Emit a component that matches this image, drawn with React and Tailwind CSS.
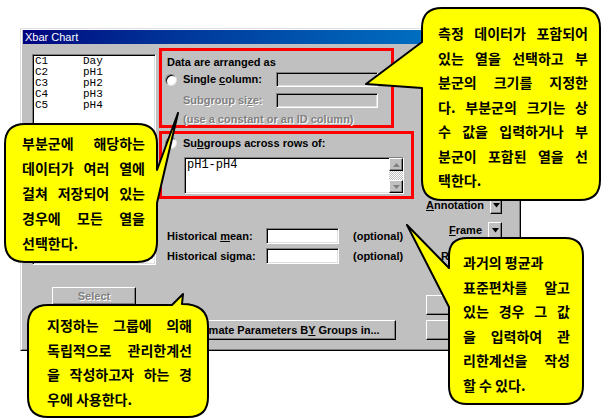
import React from "react";

const raised =
  "bg-[#c0c0c0] border border-t-white border-l-white border-r-black border-b-black shadow-[inset_-1px_-1px_0_#808080]";
const sunken =
  "border border-t-[#808080] border-l-[#808080] border-r-white border-b-white shadow-[inset_1px_1px_0_#000,inset_-1px_-1px_0_#dfdfdf]";
const disabled = "text-[#808080] [text-shadow:1px_1px_0_#fff]";

function Radio() {
  return (
    <div className="ml-[3px] w-[12px] h-[12px] shrink-0 rounded-full bg-white border border-t-[#808080] border-l-[#808080] border-r-[#dfdfdf] border-b-[#dfdfdf] shadow-[inset_1px_1px_0_#000]" />
  );
}

function DropButton() {
  return (
    <div className={`${raised} w-[14px] h-[17px] flex items-center justify-center`}>
      <svg width="7" height="5" viewBox="0 0 7 5">
        <path d="M0 0 H7 L3.5 4.5 Z" fill="#000" />
      </svg>
    </div>
  );
}

function ScrollArrow({ up }) {
  return (
    <div className={`${raised} h-[13px] flex items-center justify-center`}>
      <svg width="7" height="4" viewBox="0 0 7 4">
        {up ? (
          <path d="M0 4 H7 L3.5 0 Z" fill="#808080" />
        ) : (
          <path d="M0 0 H7 L3.5 4 Z" fill="#808080" />
        )}
      </svg>
    </div>
  );
}

function Dialog() {
  const columns = [
    ["C1", "Day"],
    ["C2", "pH1"],
    ["C3", "pH2"],
    ["C4", "pH3"],
    ["C5", "pH4"],
  ];
  return (
    <div className="w-[501px] h-[323px] bg-[#c0c0c0] border border-t-[#dfdfdf] border-l-[#dfdfdf] border-r-black border-b-black">
      <div className="h-full px-[1px] flex flex-col border border-t-white border-l-white border-r-[#808080] border-b-[#808080]">
        {/* title bar */}
        <div className="h-[14px] pl-[2px] bg-linear-to-r from-[#000080] to-[#1084d0] text-white text-[11px] leading-[14px]">
          Xbar Chart
        </div>

        <div className="flex font-bold">
          {/* variables list + Select */}
          <div className="ml-[9px] w-[124px] flex flex-col">
            <div className={`${sunken} mt-[10px] h-[211px] bg-white pl-[2px] pt-[1px] [font-family:'Liberation_Mono',monospace] font-normal text-[11px]`}>
              {columns.map(([c, n]) => (
                <div key={c} className="flex h-[11px] leading-[11px]">
                  <span className="w-[48px]">{c}</span>
                  <span>{n}</span>
                </div>
              ))}
            </div>
            <div className={`${raised} mt-[22px] ml-[20px] w-[84px] h-[18px] flex items-center justify-center ${disabled}`}>
              Select
            </div>
          </div>

          {/* middle column */}
          <div className="ml-[3px] w-[255px] flex flex-col">
            <div className="mt-[4px] w-[235px] h-[80px] border-[3px] border-[#ff0000]">
              <div className="pl-[5px] pt-[5px] leading-[13px]">Data are arranged as</div>
              <div className="mt-[3px] h-[15px] flex items-center">
                <Radio />
                <span className="ml-[6px] w-[93px]">
                  Single <u>c</u>olumn:
                </span>
                <div className={`${sunken} w-[102px] h-[15px]`} />
              </div>
              <div className="mt-[6px] h-[15px] flex items-center">
                <span className={`ml-[21px] w-[93px] ${disabled}`}>
                  Subgroup si<u>z</u>e:
                </span>
                <div className={`${sunken} w-[102px] h-[15px]`} />
              </div>
              <div className={`mt-[5px] ml-[21px] leading-[12px] ${disabled}`}>
                (use a constant or an ID column)
              </div>
            </div>

            <div className="mt-[3px] w-[255px] h-[68px] border-[3px] border-[#ff0000]">
              <div className="mt-[3px] h-[12px] flex items-center">
                <Radio />
                <span className="ml-[6px]">
                  Su<u>b</u>groups across rows of:
                </span>
              </div>
              <div className={`${sunken} mt-[8px] ml-[22px] w-[220px] h-[37px] bg-white flex`}>
                <div className="flex-1 pl-[2px] pt-[1px] [font-family:'Liberation_Mono',monospace] font-normal text-[12px] leading-[13px]">
                  pH1-pH4
                </div>
                <div className="w-[14px] flex flex-col">
                  <ScrollArrow up />
                  <div className="flex-1 bg-[repeating-conic-gradient(#c0c0c0_0_25%,#ffffff_0_50%)] bg-size-[2px_2px]" />
                  <ScrollArrow />
                </div>
              </div>
            </div>

            <div className="mt-[29px] h-[16px] flex items-center">
              <span className="ml-[8px] w-[99px]">
                Historical <u>m</u>ean:
              </span>
              <div className={`${sunken} w-[73px] h-[16px] bg-white`} />
              <span className="ml-[14px]">(optional)</span>
            </div>
            <div className="mt-[4px] h-[16px] flex items-center">
              <span className="ml-[8px] w-[99px]">Historical sigma:</span>
              <div className={`${sunken} w-[73px] h-[16px] bg-white`} />
              <span className="ml-[14px]">(optional)</span>
            </div>

            <div className={`${raised} mt-[56px] ml-[13px] w-[224px] h-[20px] flex items-center justify-center`}>
              <span>
                Estimate Parameters B<u>Y</u> Groups in...
              </span>
            </div>
          </div>

          {/* right column */}
          <div className="ml-[12px] w-[90px] flex flex-col">
            <div className="mt-[153px] h-[17px] flex items-center justify-end gap-[6px] pr-[14px]">
              <span>
                <u>A</u>nnotation
              </span>
              <DropButton />
            </div>
            <div className="mt-[8px] h-[17px] flex items-center justify-end gap-[6px] pr-[14px]">
              <span>
                <u>F</u>rame
              </span>
              <DropButton />
            </div>
            <div className="mt-[9px] h-[17px] flex items-center gap-[6px] pl-[15px]">
              <span>Reference</span>
            </div>
            <div className={`${raised} mt-[30px] w-[88px] h-[20px]`} />
            <div className={`${raised} mt-[5px] w-[88px] h-[20px]`} />
          </div>
        </div>
      </div>
    </div>
  );
}

function Line({ words }) {
  return (
    <div className="flex justify-between">
      {words.map((w, i) => (
        <span key={i}>{w}</span>
      ))}
    </div>
  );
}

function Callouts() {
  return (
    <>
      <svg className="absolute inset-0 pointer-events-none" width="606" height="419" viewBox="0 0 606 419">
        <g fill="#ffff00" stroke="#000" strokeWidth="2" strokeLinejoin="round">
          <path d="M442 8 H580 Q600 8 600 28 V180 Q600 200 580 200 H442 Q422 200 422 180 V88 L366 84 L422 42 V28 Q422 8 442 8 Z" />
          <path d="M25 124 H137 Q157 124 157 144 V170 L178 113 L157 203 V242 Q157 262 137 262 H25 Q5 262 5 242 V144 Q5 124 25 124 Z" />
          <path d="M48 305 H172 L183 294 L182 304 Q208 304 208 326 V397 Q208 417 188 417 H48 Q28 417 28 397 V325 Q28 305 48 305 Z" />
          <path d="M467 238 H565 Q583 238 583 256 V386 Q583 404 565 404 H467 Q449 404 449 386 V307 L407 225 L449 268 V256 Q449 238 467 238 Z" />
        </g>
      </svg>

      <div className="absolute left-[438px] top-[21px] w-[150px] [font-family:'Noto_Sans_CJK_KR',sans-serif] font-bold text-[14px] leading-[24.5px]">
        <Line words={["측정", "데이터가", "포함되어"]} />
        <Line words={["있는", "열을", "선택하고", "부"]} />
        <Line words={["분군의", "크기를", "지정한"]} />
        <Line words={["다.", "부분군의", "크기는", "상"]} />
        <Line words={["수", "값을", "입력하거나", "부"]} />
        <Line words={["분군이", "포함된", "열을", "선"]} />
        <div>택한다.</div>
      </div>

      <div className="absolute left-[22px] top-[131px] w-[123px] [font-family:'Noto_Sans_CJK_KR',sans-serif] font-bold text-[14px] leading-[25px]">
        <Line words={["부분군에", "해당하는"]} />
        <Line words={["데이터가", "여러", "열에"]} />
        <Line words={["걸쳐", "저장되어", "있는"]} />
        <Line words={["경우에", "모든", "열을"]} />
        <div>선택한다.</div>
      </div>

      <div className="absolute left-[47px] top-[313px] w-[145px] [font-family:'Noto_Sans_CJK_KR',sans-serif] font-bold text-[14px] leading-[24.5px]">
        <Line words={["지정하는", "그룹에", "의해"]} />
        <Line words={["독립적으로", "관리한계선"]} />
        <Line words={["을", "작성하고자", "하는", "경"]} />
        <div>우에 사용한다.</div>
      </div>

      <div className="absolute left-[463px] top-[250px] w-[107px] [font-family:'Noto_Sans_CJK_KR',sans-serif] font-bold text-[14px] leading-[24.6px]">
        <div>과거의 평균과</div>
        <Line words={["표준편차를", "알고"]} />
        <Line words={["있는", "경우", "그", "값"]} />
        <Line words={["을", "입력하여", "관"]} />
        <Line words={["리한계선을", "작성"]} />
        <div>할 수 있다.</div>
      </div>
    </>
  );
}

export default function App() {
  return (
    <div className="relative w-[606px] h-[419px] overflow-hidden bg-white text-black text-[11px] [font-family:'Liberation_Sans',Arial,sans-serif]">
      <div className="pt-[28px] pl-[20px]">
        <Dialog />
      </div>
      <Callouts />
    </div>
  );
}
